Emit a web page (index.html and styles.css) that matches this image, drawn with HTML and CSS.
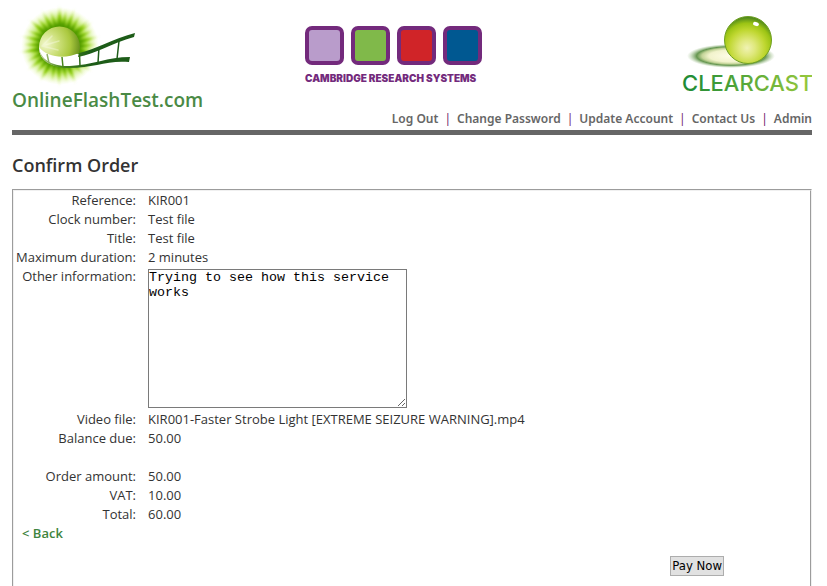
FILE: index.html
```html
<!DOCTYPE html>
<html lang="en">
<head>
<meta charset="utf-8">
<title>Confirm Order</title>
<meta name="viewport" content="width=device-width, initial-scale=1">
<link rel="stylesheet" href="styles.css">
</head>
<body>
<header class="header">
  <div class="logos">
    <div class="brand">
      <svg class="brand-mark" width="136" height="82" viewBox="0 0 136 82" aria-hidden="true">
        <defs>
          <radialGradient id="halo" cx="60" cy="46" r="39" gradientUnits="userSpaceOnUse">
            <stop offset="0" stop-color="#5f9e00"/>
            <stop offset=".52" stop-color="#6cae00"/>
            <stop offset=".68" stop-color="#9cd81e" stop-opacity=".8"/>
            <stop offset="1" stop-color="#e4fa9a" stop-opacity="0"/>
          </radialGradient>
          <radialGradient id="ray" cx="60" cy="46" r="42" gradientUnits="userSpaceOnUse">
            <stop offset=".5" stop-color="#4f9a00"/>
            <stop offset=".7" stop-color="#86c800" stop-opacity=".8"/>
            <stop offset="1" stop-color="#c8f050" stop-opacity="0"/>
          </radialGradient>
          <filter id="soft" x="-20%" y="-20%" width="140%" height="140%"><feGaussianBlur stdDeviation=".8"/></filter>
          <path id="rays" fill="url(#ray)" d="M57 28 59 4 61 28ZM61 28 66 10 65 29ZM65 29 75 7 69 31ZM69 31 80 15 72 33ZM72 33 90 19 75 36Z"/>
          <radialGradient id="sun" cx="46" cy="44" r="38" gradientUnits="userSpaceOnUse">
            <stop offset="0" stop-color="#f2f7cc"/>
            <stop offset=".35" stop-color="#cbdf78"/>
            <stop offset=".65" stop-color="#aac83e"/>
            <stop offset="1" stop-color="#4f7c10"/>
          </radialGradient>
          <linearGradient id="rail" x1="40" y1="0" x2="90" y2="0" gradientUnits="userSpaceOnUse">
            <stop offset="0" stop-color="#b8c890"/>
            <stop offset=".4" stop-color="#4d8a1c"/>
            <stop offset="1" stop-color="#1d5c18"/>
          </linearGradient>
        </defs>
        <circle cx="60" cy="46" r="39" fill="url(#halo)"/>
        <g filter="url(#soft)">
          <use href="#rays"/>
          <use href="#rays" transform="rotate(55 60 46)"/>
          <use href="#rays" transform="rotate(108 60 46)"/>
          <use href="#rays" transform="rotate(160 60 46)"/>
          <use href="#rays" transform="rotate(212 60 46)"/>
          <use href="#rays" transform="rotate(263 60 46)"/>
          <use href="#rays" transform="rotate(312 60 46)"/>
        </g>
        <path fill="#fff" d="M39 47C39 60 50 67 66 67C92 66 112 59 129 59L134 35C113 38 92 51 79 54Z"/>
        <path fill="url(#sun)" d="M39 47A20.500 20.500 0 1 1 80 47C80 50 79 52 79 53C66 59 47 58 39 47Z"/>
        <path d="M42 46 52 36M42 46 59 41M42 46 58 50" stroke="#fbfde8" stroke-width="1.500" stroke-linecap="round" opacity=".4" fill="none"/>
        <path fill="url(#rail)" d="M79 53C94 50 112 39 135 33L134 37C112 43 95 54 78 57ZM39 47C40 60 54 67 70 66C92 65 108 57 130 57L129 62C107 60 94 68 69 68C52 68 39 61 39 47Z"/>
        <path stroke="url(#rail)" stroke-width="1.500" fill="none" d="M47 54 49 63M62 57 63 67M79.500 53 80 66M99 47 98 63M119 41 117 59"/>
      </svg>
      <div class="brand-name">OnlineFlashTest.com</div>
    </div>
    <div class="crs">
      <div class="tiles" aria-hidden="true">
        <span class="tile tile-lilac"></span><span class="tile tile-green"></span><span class="tile tile-red"></span><span class="tile tile-blue"></span>
      </div>
      <div class="crs-name">CAMBRIDGE RESEARCH SYSTEMS</div>
    </div>
    <div class="clearcast">
      <svg width="130" height="96" viewBox="682 0 130 96" role="img" aria-label="Clearcast">
        <defs>
          <radialGradient id="ball" cx="747" cy="48" r="33" gradientUnits="userSpaceOnUse">
            <stop offset="0" stop-color="#f0f2b4"/>
            <stop offset=".25" stop-color="#dfe87c"/>
            <stop offset=".55" stop-color="#bfd730"/>
            <stop offset=".75" stop-color="#9cc414"/>
            <stop offset="1" stop-color="#2f7020"/>
          </radialGradient>
          <radialGradient id="shadow" cx=".5" cy=".5" r=".5">
            <stop offset="0" stop-color="#fffde8"/>
            <stop offset=".5" stop-color="#f2f3cc"/>
            <stop offset=".66" stop-color="#c3d498"/>
            <stop offset=".78" stop-color="#659650"/>
            <stop offset="1" stop-color="#a9c795" stop-opacity="0"/>
          </radialGradient>
          <linearGradient id="word" x1="683" y1="0" x2="812" y2="0" gradientUnits="userSpaceOnUse">
            <stop offset="0" stop-color="#1d8a36"/>
            <stop offset="1" stop-color="#97c93d"/>
          </linearGradient>
        </defs>
        <ellipse cx="731" cy="56" rx="44" ry="12" fill="url(#shadow)"/>
        <circle cx="748" cy="40" r="23.500" fill="url(#ball)" stroke="#6fa022" stroke-width="1"/>
        <ellipse cx="756" cy="24" rx="3" ry="2" fill="#fff" transform="rotate(22 756 24)"/>
        <text class="word" x="682" y="91" fill="url(#word)">CLEARCAST</text>
      </svg>
    </div>
  </div>
  <nav class="nav">
    <a href="#">Log Out</a><span>|</span><a href="#">Change Password</a><span>|</span><a href="#">Update Account</a><span>|</span><a href="#">Contact Us</a><span>|</span><a href="#">Admin</a>
  </nav>
</header>
<main>
  <h1>Confirm Order</h1>
  <form class="order">
    <table class="details">
      <tr><th scope="row">Reference:</th><td>KIR001</td></tr>
      <tr><th scope="row">Clock number:</th><td>Test file</td></tr>
      <tr><th scope="row">Title:</th><td>Test file</td></tr>
      <tr><th scope="row">Maximum duration:</th><td>2 minutes</td></tr>
      <tr><th scope="row"><label for="info">Other information:</label></th><td><textarea id="info" spellcheck="false">Trying to see how this service works</textarea></td></tr>
      <tr><th scope="row">Video file:</th><td>KIR001-Faster Strobe Light [EXTREME SEIZURE WARNING].mp4</td></tr>
      <tr><th scope="row">Balance due:</th><td>50.00</td></tr>
      <tr class="spacer"><td colspan="2"></td></tr>
      <tr><th scope="row">Order amount:</th><td>50.00</td></tr>
      <tr><th scope="row">VAT:</th><td>10.00</td></tr>
      <tr><th scope="row">Total:</th><td>60.00</td></tr>
    </table>
    <a class="back" href="#">&lt; Back</a>
    <div class="actions"><button type="button">Pay Now</button></div>
  </form>
</main>
</body>
</html>
```
FILE: styles.css
```css
* { box-sizing: border-box; }

body {
  margin: 0;
  padding: 0 15px 0 12px;
  background: #fff;
  color: #333;
  font: 13px/19px "Trebuchet MS", "Open Sans", sans-serif;
}

a { text-decoration: none; }

.header { border-bottom: 5px solid #666; }

.logos {
  display: grid;
  grid-template-columns: 293fr 377fr 130fr;
  align-items: start;
}

.brand-mark {
  display: block;
  margin: 0 0 6px -12px;
  overflow: visible;
}

.brand-name {
  height: 21px;
  color: #4a8a45;
  font: 600 19px/25px "Trebuchet MS", "Open Sans", sans-serif;
}

.crs { padding-top: 26px; }

.tiles {
  display: flex;
  gap: 7px;
}

.tile {
  width: 39px;
  height: 39px;
  border: 4px solid #732a7c;
  border-radius: 7px;
}

.tile-lilac { background: #b99ccb; }
.tile-green { background: #80b94a; }
.tile-red { background: #d02428; }
.tile-blue { background: #005891; }

.crs-name {
  margin-top: 7px;
  color: #732a7c;
  font: 900 10px/12px Inter, sans-serif;
  white-space: nowrap;
}

.clearcast svg {
  display: block;
  margin-left: auto;
}

.word { font: 500 22px Inter, sans-serif; }

.nav {
  display: flex;
  justify-content: flex-end;
  gap: 6px;
  padding-bottom: 2px;
  color: #73246b;
  font: 12px/19px "Trebuchet MS", "Noto Sans", sans-serif;
}

.nav a {
  color: #666;
  font-weight: 600;
}

h1 {
  margin: 18px 0 12px;
  font: 600 18px/24px "Trebuchet MS", "Open Sans", sans-serif;
}

.order {
  padding: 0 8px 10px 2px;
  border: 2px groove #f0f0f0;
  border-bottom: 0;
}

.details { border-collapse: collapse; }

.details th,
.details td {
  height: 19px;
  padding: 0;
  font-weight: 400;
  text-align: left;
  vertical-align: top;
}

.details th {
  padding-right: 12px;
  text-align: right;
  white-space: nowrap;
}

textarea {
  display: block;
  width: 259px;
  height: 139px;
  margin: 2px 0;
  padding: 0;
  border: 1px solid #7a7a7a;
  color: #000;
  font: 13.333px/15px "Liberation Mono", "Courier New", monospace;
}

.back {
  display: block;
  width: max-content;
  padding-left: 6px;
  color: #3f8540;
  font-weight: 600;
}

.actions {
  display: flex;
  justify-content: flex-end;
  padding: 13px 78px 0 0;
}

button {
  padding: 1px;
  border: 1px solid #adadad;
  background: #e1e1e1;
  color: #000;
  font: 13px/16px Tahoma, "DejaVu Sans Condensed", sans-serif;
}
```
